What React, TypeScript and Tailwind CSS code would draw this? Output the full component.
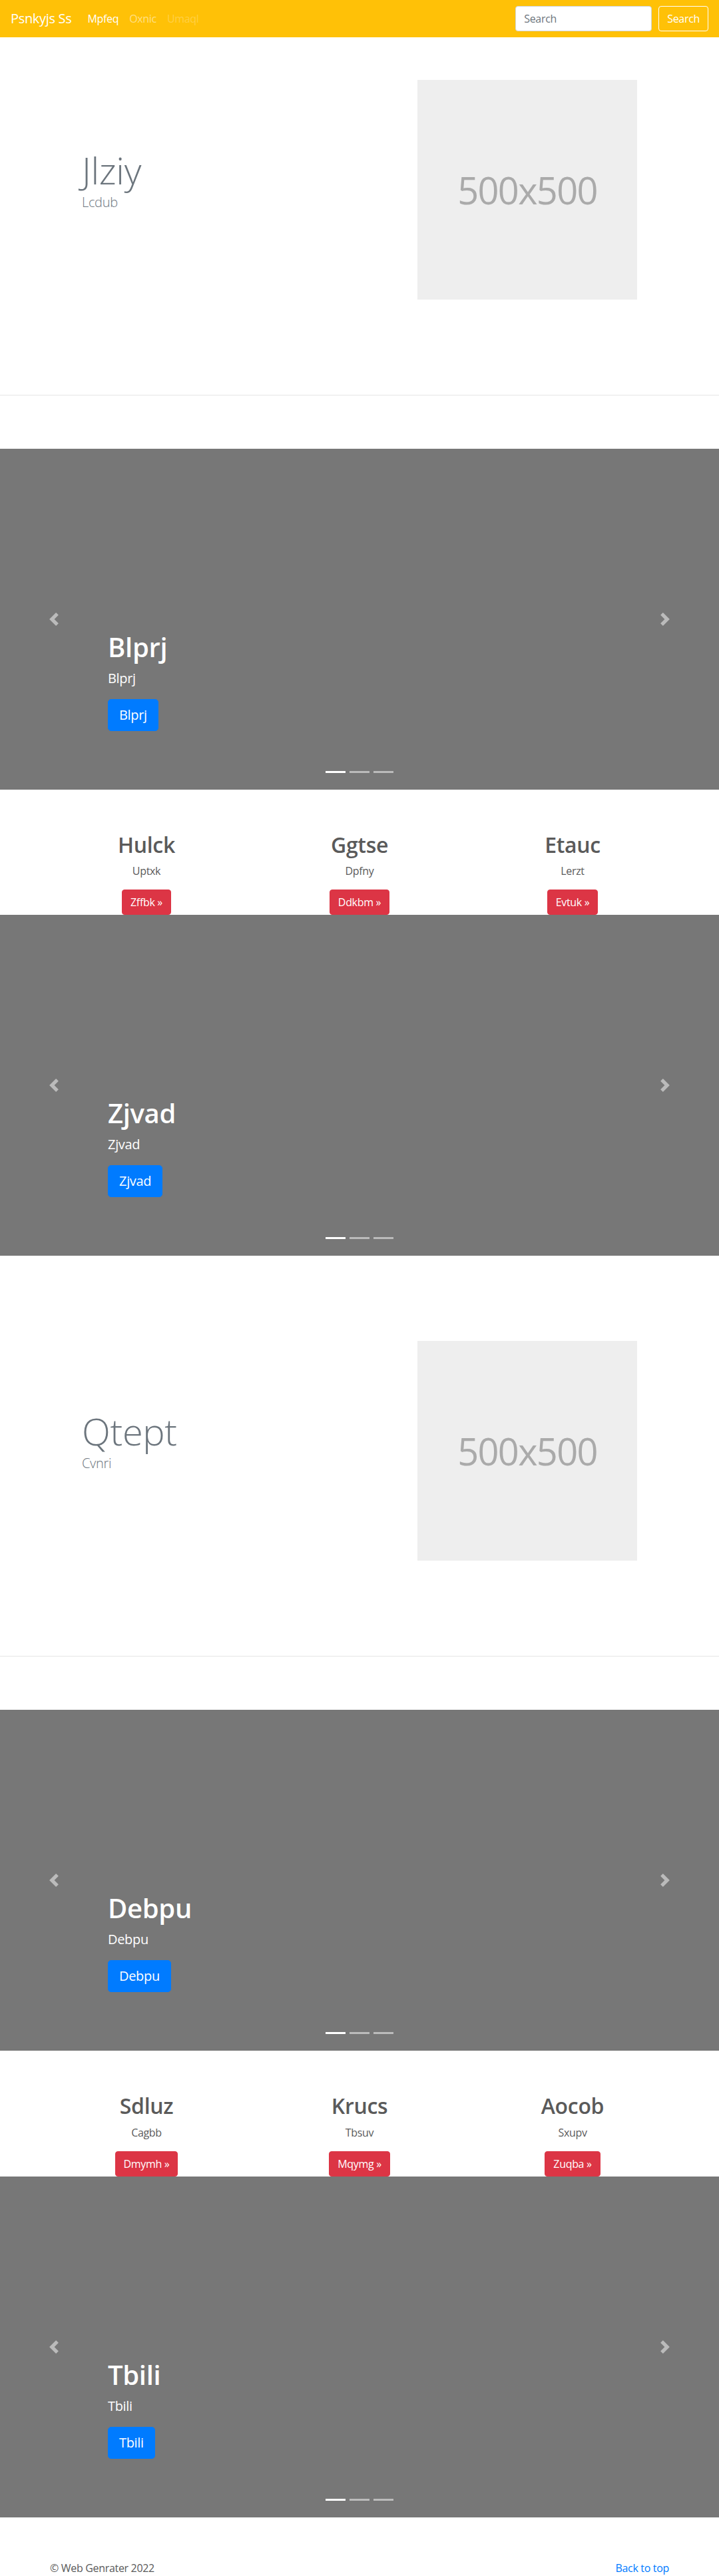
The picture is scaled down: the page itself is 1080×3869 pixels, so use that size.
import React from "react";

const FONT = "font-['Open_Sans','Noto_Sans',sans-serif] tracking-[-0.02em]";

function PrevIcon() {
  return (
    <svg width="20" height="20" viewBox="0 0 8 8" fill="#fff">
      <path d="M5.25 0l-4 4 4 4 1.5-1.5L4.25 4l2.5-2.5L5.25 0z" />
    </svg>
  );
}

function NextIcon() {
  return (
    <svg width="20" height="20" viewBox="0 0 8 8" fill="#fff">
      <path d="M2.75 0l-1.5 1.5L3.75 4l-2.5 2.5L2.75 8l4-4-4-4z" />
    </svg>
  );
}

function Navbar() {
  return (
    <nav className="h-[56px] bg-[#ffc107] px-4 flex items-center">
      <a className="text-white text-[20px] leading-[30px] py-[5px] mr-4">Psnkyjs Ss</a>
      <ul className="flex items-center text-[16px] leading-6">
        <li className="px-2 text-white">Mpfeq</li>
        <li className="px-2 text-white/50">Oxnic</li>
        <li className="px-2 text-white/25">Umaql</li>
      </ul>
      <form className="ml-auto flex items-center gap-[10px]">
        <input
          className="w-[205px] h-[38px] bg-white border border-[#ced4da] rounded-[4px] px-3 text-[16px] text-[#495057] placeholder:text-[#6c757d] outline-none"
          placeholder="Search"
        />
        <button
          type="button"
          className="h-[38px] px-3 border border-white rounded-[4px] text-white text-[16px] leading-6"
        >
          Search
        </button>
      </form>
    </nav>
  );
}

function Hero({ title, sub }: { title: string; sub: string }) {
  return (
    <section>
      <div className="w-[960px] mx-auto px-[15px] pt-16 pb-[143px] flex items-center">
        <div className="w-1/2 pl-[48px]">
          <h1 className="text-[56px] leading-[1.2] font-light text-[#6c757d]">{title}</h1>
          <p className="text-[20px] leading-[30px] font-light text-[#6c757d] mb-[29px]">{sub}</p>
        </div>
        <div className="w-1/2 flex justify-end pr-[48px]">
          <div className="w-[330px] h-[330px] bg-[#eeeeee] flex items-center justify-center text-[#aaaaaa] text-[56px] tracking-[-0.03em]">
            500x500
          </div>
        </div>
      </div>
      <hr className="border-0 border-t border-[#e6e6e6]" />
      <div className="h-[80px]" />
    </section>
  );
}

function Carousel({ title }: { title: string }) {
  return (
    <div className="relative h-[512px] bg-[#777777] overflow-hidden">
      <div className="absolute inset-y-0 left-0 w-[15%] flex items-center justify-center opacity-50">
        <PrevIcon />
      </div>
      <div className="absolute inset-y-0 right-0 w-[15%] flex items-center justify-center opacity-50">
        <NextIcon />
      </div>
      <div className="absolute left-[15%] right-[15%] bottom-[88px] text-white text-left">
        <h1 className="text-[40px] leading-[1.2] font-semibold mb-2">{title}</h1>
        <p className="text-[20px] leading-[30px] mb-4">{title}</p>
        <p>
          <a className="inline-block bg-[#007bff] border border-[#007bff] text-white text-[20px] leading-[30px] px-4 py-2 rounded-[4.8px]">
            {title}
          </a>
        </p>
      </div>
      <div className="absolute left-0 right-0 bottom-[25px] flex justify-center gap-[6px]">
        <span className="w-[30px] h-[3px] bg-white" />
        <span className="w-[30px] h-[3px] bg-white opacity-50" />
        <span className="w-[30px] h-[3px] bg-white opacity-50" />
      </div>
    </div>
  );
}

function Marketing({ items }: { items: { h: string; p: string; b: string }[] }) {
  return (
    <div className="w-[960px] mx-auto pt-16 grid grid-cols-3 text-center text-[#5a5a5a]">
      {items.map((it) => (
        <div key={it.h} className="px-[15px] flex flex-col items-center">
          <h2 className="text-[32px] leading-[1.2] font-semibold mb-2">{it.h}</h2>
          <p className="text-[16px] leading-6 mb-4 mx-3">{it.p}</p>
          <a className="inline-block bg-[#dc3545] border border-[#dc3545] text-white text-[16px] leading-6 px-3 py-[6px] rounded-[4px]">
            {it.b} »
          </a>
        </div>
      ))}
    </div>
  );
}

export default function App() {
  return (
    <div className={`${FONT} bg-white min-h-[3869px]`}>
      <Navbar />
      <Hero title="Jlziy" sub="Lcdub" />
      <Carousel title="Blprj" />
      <Marketing
        items={[
          { h: "Hulck", p: "Uptxk", b: "Zffbk" },
          { h: "Ggtse", p: "Dpfny", b: "Ddkbm" },
          { h: "Etauc", p: "Lerzt", b: "Evtuk" },
        ]}
      />
      <Carousel title="Zjvad" />
      <div className="h-16" />
      <Hero title="Qtept" sub="Cvnri" />
      <Carousel title="Debpu" />
      <Marketing
        items={[
          { h: "Sdluz", p: "Cagbb", b: "Dmymh" },
          { h: "Krucs", p: "Tbsuv", b: "Mqymg" },
          { h: "Aocob", p: "Sxupv", b: "Zuqba" },
        ]}
      />
      <Carousel title="Tbili" />
      <footer className="w-[960px] mx-auto px-[15px] pt-16 pb-12 flex justify-between text-[16px] leading-6 text-[#5a5a5a]">
        <p>© Web Genrater 2022</p>
        <a className="text-[#007bff]">Back to top</a>
      </footer>
    </div>
  );
}
